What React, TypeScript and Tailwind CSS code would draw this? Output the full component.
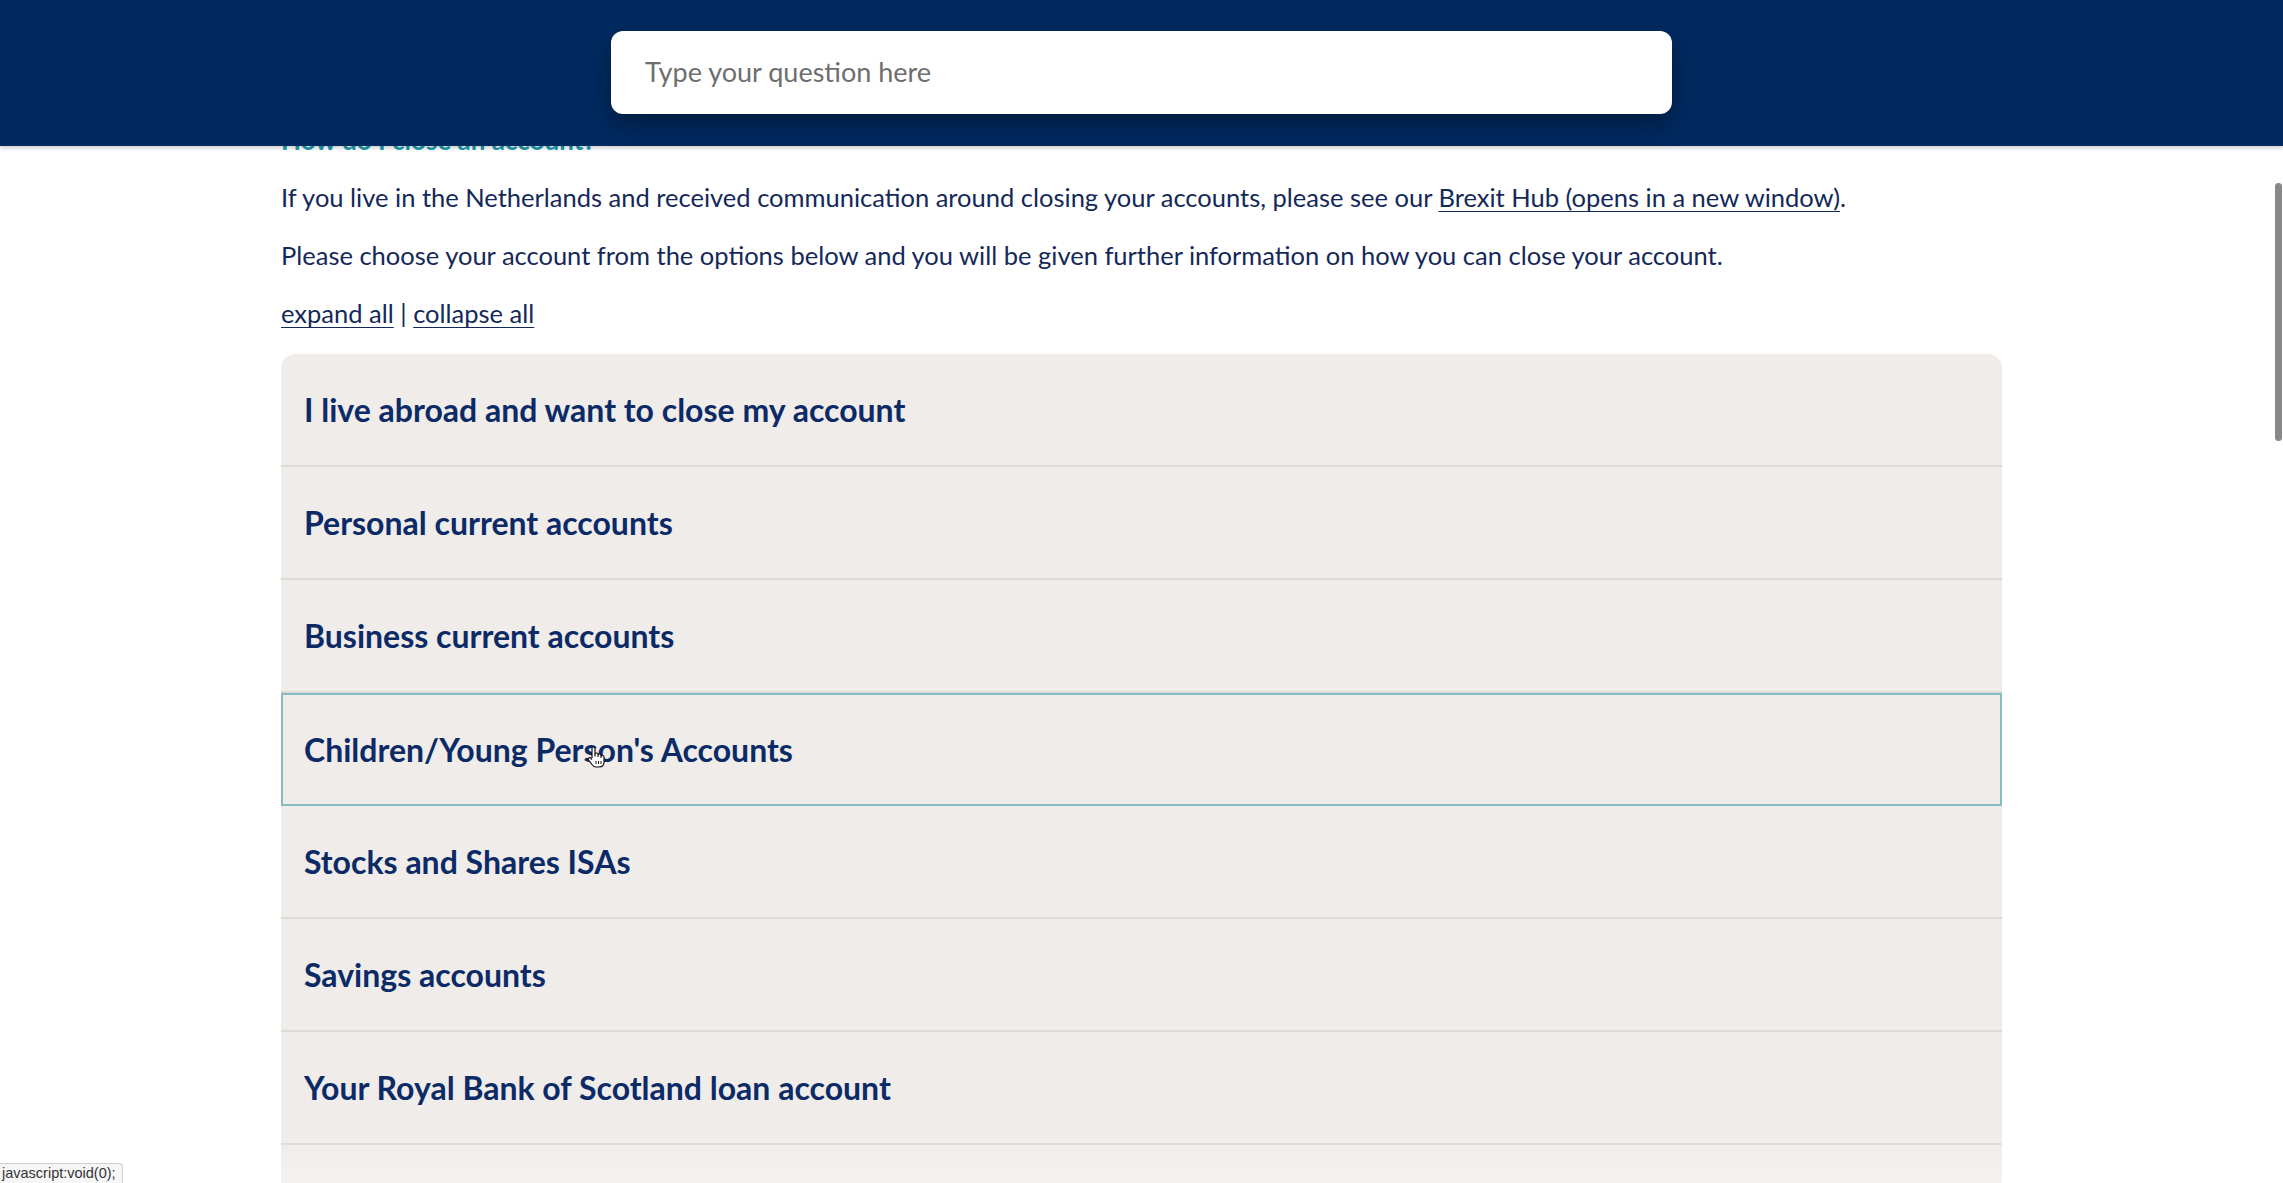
import React from "react";

const rows = [
  "I live abroad and want to close my account",
  "Personal current accounts",
  "Business current accounts",
  "Children/Young Person's Accounts",
  "Stocks and Shares ISAs",
  "Savings accounts",
  "Your Royal Bank of Scotland loan account",
  "",
];

function Hand() {
  return (
    <svg width="20" height="24" viewBox="0 0 20 24" className="absolute left-[586px] top-[745px]">
      <path
        d="M6 13V3.5a1.5 1.5 0 0 1 3 0V11V9.5a1.5 1.5 0 0 1 3 0V11.5V10.5a1.5 1.5 0 0 1 3 0V12.5V12a1.5 1.5 0 0 1 3 0v5c0 3-2 5-5 5H10c-2 0-3-1-4-2.5L2.5 15a1.4 1.4 0 0 1 2.2-1.8L6 14.5"
        fill="#fff"
        stroke="#111"
        strokeWidth="1.2"
        strokeLinejoin="round"
      />
      <path d="M10 16v3M12.5 16v3M15 16v3" stroke="#111" strokeWidth="1" />
    </svg>
  );
}

export default function App() {
  return (
    <div
      className="relative h-[1183px] w-full overflow-hidden bg-white"
      style={{ fontFamily: "Lato, 'Open Sans', sans-serif" }}
    >
      {/* content */}
      <div className="pl-[281px] pt-[125px] w-[2002px]">
        <h1 className="text-[26px] leading-[30px] font-bold text-[#1b9bb2]">How do I close an account?</h1>
        <p className="mt-[27px] text-[25.5px] leading-[30px] text-[#14285a]">
          If you live in the Netherlands and received communication around closing your accounts, please see our{" "}
          <a className="underline underline-offset-4 decoration-1">Brexit Hub (opens in a new window)</a>.
        </p>
        <p className="mt-[28px] text-[25.5px] leading-[30px] text-[#14285a]">
          Please choose your account from the options below and you will be given further information on how you can close your account.
        </p>
        <p className="mt-[28px] text-[25.5px] leading-[30px] text-[#14285a]">
          <a className="underline underline-offset-4 decoration-1">expand all</a> |{" "}
          <a className="underline underline-offset-4 decoration-1">collapse all</a>
        </p>

        <div className="mt-[26px] w-[1721px] rounded-t-[14px] bg-[#efecea]">
          {rows.map((r, i) => (
            <div
              key={i}
              className={
                i === 3
                  ? "flex h-[113px] items-center border-2 border-[#86bcc0] px-[21px]"
                  : "flex h-[113px] items-center border-b-2 border-[#dedad6] px-[23px]"
              }
            >
              <span className="text-[32px] font-bold text-[#0b2a66]">{r}</span>
            </div>
          ))}
        </div>
      </div>

      {/* header */}
      <div className="absolute inset-x-0 top-0 flex h-[146px] justify-center bg-[#002a60] shadow-[0_2px_4px_rgba(0,0,0,0.2)]">
        <div className="mt-[31px] flex h-[83px] w-[1061px] items-center rounded-[12px] bg-white pl-[34px] shadow-[0_10px_24px_rgba(0,0,0,0.35)]">
          <span className="text-[27px] text-[#6e6e6e]">Type your question here</span>
        </div>
      </div>

      {/* scrollbar */}
      <div className="absolute right-[1px] top-[183px] h-[258px] w-[7px] rounded-full bg-[#888888]" />

      <Hand />

      {/* bottom fade */}
      <div className="pointer-events-none absolute inset-x-0 bottom-0 h-[50px] bg-gradient-to-b from-transparent to-[rgba(255,255,255,0.35)]" />

      {/* status bar */}
      <div
        className="absolute bottom-0 left-0 rounded-tr-[4px] border-t border-r border-[#cfcfcf] bg-[#f6f6f6] pl-[2px] pr-[6px] text-[14.5px] leading-[19px] text-[#333]"
        style={{ fontFamily: "'Liberation Sans', Arial, sans-serif" }}
      >
        javascript:void(0);
      </div>
    </div>
  );
}
